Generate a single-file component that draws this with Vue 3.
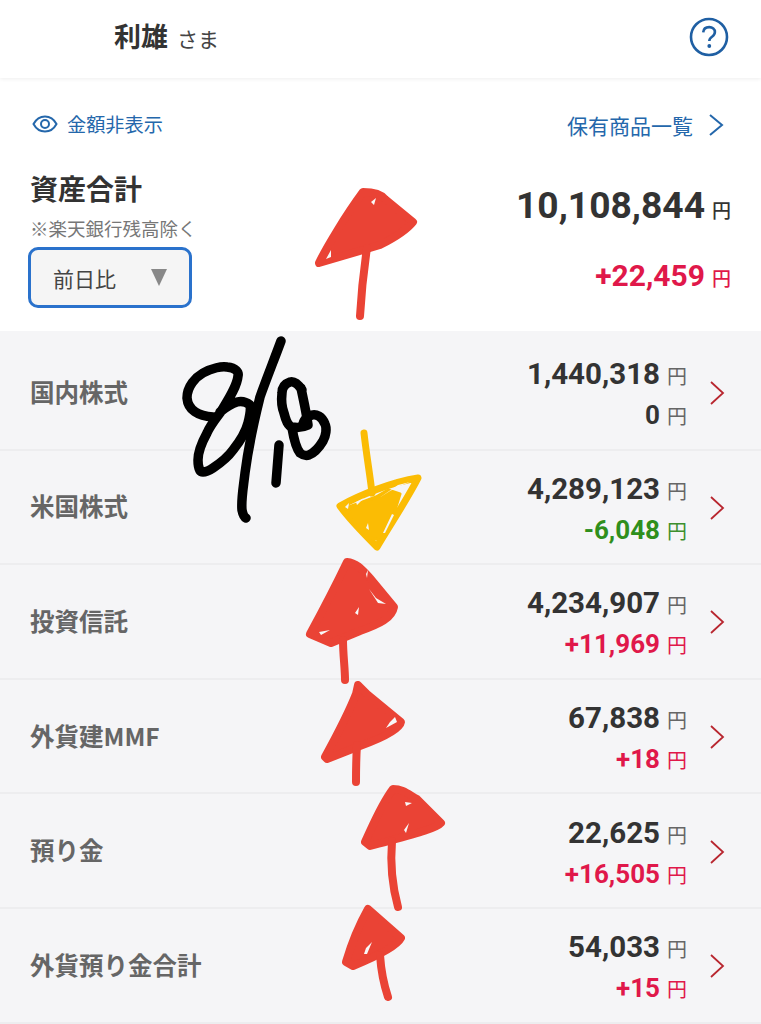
<template>
  <div class="page">
    <header class="top-bar">
      <div class="user-name">
        <strong>利雄</strong>
        <span>さま</span>
      </div>
      <button type="button" class="help-btn" aria-label="ヘルプ">
        <svg viewBox="0 0 40 40" width="40" height="40">
          <circle cx="20" cy="20" r="18" fill="none" stroke="#1f5fa3" stroke-width="2.6" />
          <path d="M14.2 15.4c.3-3.4 2.7-5.3 6-5.3 3.3 0 5.7 2 5.7 4.9 0 2.2-1.1 3.4-2.9 4.7-1.9 1.3-2.7 2.3-2.7 4.4" fill="none" stroke="#1f5fa3" stroke-width="2.6" />
          <circle cx="20.3" cy="29" r="1.9" fill="#1f5fa3" />
        </svg>
      </button>
    </header>

    <section class="summary">
      <div class="summary-links">
        <a class="link hide-link">
          <svg viewBox="0 0 26 18" width="26" height="18">
            <path d="M1.500 9C4.200 4 8.200 1.500 13 1.500S21.800 4 24.500 9c-2.700 5-6.700 7.500-11.500 7.500S4.200 14 1.500 9z" fill="none" stroke="#2467ab" stroke-width="2" />
            <circle cx="13" cy="9" r="4" fill="none" stroke="#2467ab" stroke-width="2" />
          </svg>
          金額非表示
        </a>
        <a class="link list-link">
          保有商品一覧
          <svg viewBox="0 0 16 24" width="16" height="24">
            <path d="M2 2l12 10L2 22" fill="none" stroke="#2467ab" stroke-width="2" />
          </svg>
        </a>
      </div>
      <div class="summary-body">
        <div class="summary-left">
          <h1>資産合計</h1>
          <p class="note">※楽天銀行残高除く</p>
          <div class="period-select">
            <span>前日比</span>
            <i class="caret"></i>
          </div>
        </div>
        <div class="summary-right">
          <div class="total">10,108,844<small>円</small></div>
          <div class="total-change">+22,459<small>円</small></div>
        </div>
      </div>
    </section>

    <ul class="asset-list">
      <li v-for="row in rows" :key="row.name" class="asset-row">
        <span class="asset-name">{{ row.name }}</span>
        <div class="asset-values">
          <div class="asset-amount">{{ row.amount }}<small>円</small></div>
          <div class="asset-change" :class="changeClass(row.change)">{{ row.change }}<small>円</small></div>
        </div>
        <svg class="row-arrow" viewBox="0 0 16 26" width="16" height="26">
          <path d="M2 2l12 11L2 24" fill="none" stroke="#b8262f" stroke-width="1.800" />
        </svg>
      </li>
    </ul>

    <!-- hand drawn marks over the screenshot -->
    <svg class="scribbles" viewBox="0 0 761 1024" width="761" height="1024">
      <g fill="none" stroke="#000" stroke-width="9.500" stroke-linecap="round" stroke-linejoin="round">
        <path d="M213 417C198 416 188 410 187 398C187 386 196 377 203 373C212 368 222 366 227 367C236 368 239 372 238 376C237 387 228 400 220 413C214 421 210 426 207 433C201 444 198 452 198 460C198 468 200 472 203 472C207 472 210 470 213 468C222 462 228 457 233 450C241 440 246 431 248 423C250 415 251 409 250 405C245 401 241 401 237 402C230 404 225 408 220 412" />
        <path d="M281 341C274 360 266 380 260 397C253 425 248 450 245 473C243 490 241 500 242 510C243 515 244 517 246 518" />
        <path d="M302 390C298 384 294 381 290 382C284 384 282 388 282 393C281 402 282 408 284 413C286 421 288 426 292 427C298 428 304 427 308 425C306 410 303 398 301 388" />
        <path d="M292 428C294 440 296 448 300 453C304 456 306 456 309 455C316 452 320 446 323 441C326 436 327 428 325 424C322 416 316 414 312 415C306 417 303 421 303 425" />
        <path d="M279 445L276 483" />
      </g>

      <g fill="none" stroke="#fbbc04" stroke-width="7" stroke-linecap="round" stroke-linejoin="round">
        <path d="M364 433C366 452 370 475 372 493" />
        <path d="M340 506C360 495 392 482 418 478C408 498 390 525 377 547C363 533 350 520 340 506z" />
      </g>
      <path class="yellow-fill" d="M346 508L360 503L376 497L388 490L400 494L395 510L381 540L370 538z" />
      <path class="yellow-gap" d="M379 498L390 491L400 486L410 482L398 485zM383 533L392 514L394 515L385 533zM345 507L349 503L348 509zM356 502L364 498L357 505zM366 528L368 523L369 530z" />

      <g class="red-arrow">
        <path d="M363 192C372 192 380 193 385 199L413 222C405 232 390 240 380 245L319 263C326 248 346 215 363 192z" />
        <path class="stem" d="M367 248C363 275 361 298 360 316" />
      </g>
      <g class="red-arrow">
        <path d="M347 562C358 563 364 572 370 578L394 607C392 618 380 624 360 631L331 643L310 634C323 610 336 585 347 562z" />
        <path class="stem" d="M343 640C343 655 345 668 345 680" />
      </g>
      <g class="red-arrow">
        <path d="M356 694L358 685L367 694L401 722C400 729 385 737 360 746L327 759L325 757C337 735 349 712 356 694z" />
        <path class="stem" d="M357 745C356 760 356 770 356 782" />
      </g>
      <g class="red-arrow">
        <path d="M393 789C403 789 408 794 417 799L441 823C436 829 410 835 370 846L365 842C373 825 381 805 393 789z" />
        <path class="stem" d="M392 841C390 865 392 885 398 907" />
      </g>
      <g class="red-arrow">
        <path d="M368 909L401 938C397 946 375 957 353 966L346 962C351 945 359 925 368 909z" />
        <path class="stem" d="M380 955C381 970 384 985 388 997" />
      </g>
      <path class="red-gap" d="M371 202L376 198L374 205zM326 259L331 250L331 257zM366 574L368 570L367 578zM369 589L376 598L386 604L378 603zM355 613L359 607L358 615zM319 632L330 630L321 635zM390 722L395 717L397 722L386 728zM405 802L412 803L406 806zM404 830L409 823L406 833zM366 948L372 942L367 954L364 954z" />
    </svg>
  </div>
</template>

<script setup>
const rows = [
  { name: '国内株式', amount: '1,440,318', change: '0' },
  { name: '米国株式', amount: '4,289,123', change: '-6,048' },
  { name: '投資信託', amount: '4,234,907', change: '+11,969' },
  { name: '外貨建MMF', amount: '67,838', change: '+18' },
  { name: '預り金', amount: '22,625', change: '+16,505' },
  { name: '外貨預り金合計', amount: '54,033', change: '+15' },
];

const changeClass = (value) => {
  if (value.startsWith('+')) return 'up';
  if (value.startsWith('-')) return 'down';
  return '';
};
</script>

<style>
html,
body {
  margin: 0;
  background: #fff;
}
</style>

<style scoped>
.page {
  position: relative;
  width: 761px;
  height: 1024px;
  overflow: hidden;
  background: #fff;
  color: #333;
  font-family: "Noto Sans CJK JP", Roboto, sans-serif;
}

.top-bar {
  position: relative;
  z-index: 1;
  display: flex;
  align-items: center;
  justify-content: space-between;
  height: 78px;
  padding: 0 32px 4px 114px;
  box-sizing: border-box;
  background: #fff;
  box-shadow: 0 1px 4px rgba(0, 0, 0, 0.07);
}

.user-name {
  display: flex;
  align-items: baseline;
  gap: 9px;
  margin-bottom: 4px;
}

.user-name strong {
  font-size: 27px;
  font-weight: 700;
}

.user-name span {
  font-size: 21px;
  color: #444;
}

.help-btn {
  display: flex;
  padding: 0;
  border: none;
  background: transparent;
}

.summary {
  height: 253px;
  padding: 0 30px;
  box-sizing: border-box;
}

.summary-links {
  display: flex;
  align-items: center;
  justify-content: space-between;
  height: 92px;
  padding-right: 7px;
}

.link {
  display: flex;
  align-items: center;
  color: #2467ab;
}

.hide-link {
  gap: 9px;
  margin-left: 2px;
  font-size: 19.200px;
}

.list-link {
  gap: 15px;
  margin-top: 2px;
  font-size: 21px;
}

.summary-body {
  display: flex;
  justify-content: space-between;
}

.summary-left h1 {
  margin: 0;
  font-size: 28px;
  line-height: 36px;
  font-weight: 700;
}

.note {
  margin: 7px 0 0;
  font-size: 18.500px;
  line-height: 30px;
  color: #777;
}

.period-select {
  display: flex;
  align-items: center;
  justify-content: space-between;
  width: 164px;
  height: 61px;
  margin: 4px 0 0 -2px;
  padding: 0 22px 0 22px;
  box-sizing: border-box;
  border: 3px solid #2a72cc;
  border-radius: 10px;
  background: #f5f5f5;
  font-size: 21px;
  color: #444;
}

.caret {
  width: 0;
  height: 0;
  border-left: 8px solid transparent;
  border-right: 8px solid transparent;
  border-top: 17px solid #888;
}

.summary-right {
  padding-top: 12px;
  text-align: right;
  font-family: Roboto, "Noto Sans CJK JP", sans-serif;
  font-weight: 700;
}

.total {
  font-size: 37.200px;
  line-height: 46px;
}

.total-change {
  margin-top: 20px;
  font-size: 30px;
  line-height: 46px;
  color: #e0184a;
}

.summary-right small {
  margin-left: 7px;
  font-family: "Noto Sans CJK JP", sans-serif;
  font-size: 19px;
  font-weight: 500;
}

.asset-list {
  height: 693px;
  margin: 0;
  padding: 5px 0 0;
  box-sizing: border-box;
  list-style: none;
  background: #f5f5f7;
}

.asset-row {
  display: flex;
  align-items: center;
  height: 114.600px;
  padding: 0 37px 0 30px;
  box-sizing: border-box;
  border-bottom: 2px solid #ededef;
}

.asset-name {
  margin-bottom: 2px;
  font-size: 24.500px;
  font-weight: 700;
  color: #666;
}

.asset-values {
  margin-left: auto;
  padding-top: 6px;
  text-align: right;
  font-family: Roboto, "Noto Sans CJK JP", sans-serif;
  font-size: 29.500px;
  font-weight: 700;
  line-height: 42px;
}

.asset-change {
  margin-top: -3px;
  font-size: 26px;
}

.asset-change.up {
  color: #e0184a;
}

.asset-change.down {
  color: #2f8f1c;
}

.asset-values small {
  margin-left: 7px;
  font-family: "Noto Sans CJK JP", sans-serif;
  font-size: 20px;
  font-weight: 400;
  color: #666;
}

.asset-change.down small {
  color: #3d8f2e;
}

.asset-change.up small {
  color: #e0184a;
}

.row-arrow {
  margin: 2px -1px 0 22px;
}

.scribbles {
  position: absolute;
  top: 0;
  left: 0;
  z-index: 2;
  pointer-events: none;
}

.yellow-fill {
  fill: #fbbc04;
  stroke: #fbbc04;
  stroke-width: 3;
  stroke-linejoin: round;
}

.yellow-gap {
  fill: #f5f5f7;
}

.red-arrow path {
  fill: #ea4335;
  stroke: #ea4335;
  stroke-width: 8;
  stroke-linejoin: round;
}

.red-arrow .stem {
  fill: none;
  stroke-width: 8;
  stroke-linecap: round;
}

.red-gap {
  fill: #f8f8f8;
}
</style>
